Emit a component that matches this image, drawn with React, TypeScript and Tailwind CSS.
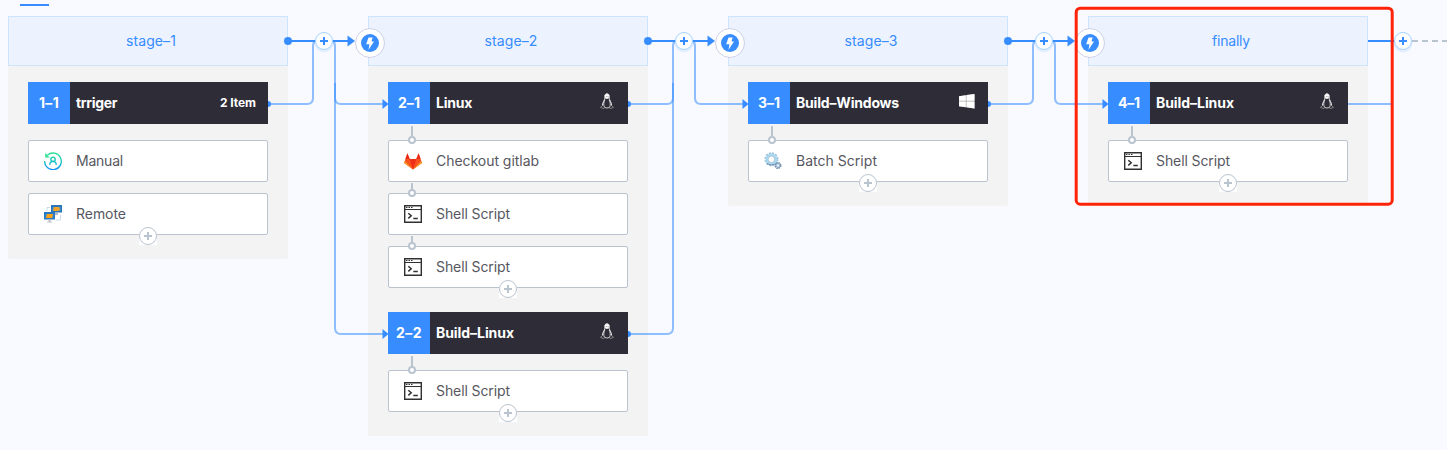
import React, { useLayoutEffect, useRef } from "react";

const sans = "font-['Inter','Liberation_Sans',sans-serif]";

type IconName = "manual" | "remote" | "gitlab" | "shell" | "batch";
type Step = { icon: IconName; label: string; w: number };
type Job = { id: string; idW: number; name: string; w: number; right: "linux" | "windows" | "items"; steps: Step[] };
type Stage = { title: string; w: number; jobs: Job[] };

const shell: Step = { icon: "shell", label: "Shell Script", w: 74 };

const stages: Stage[] = [
  {
    title: "stage–1", w: 50,
    jobs: [{ id: "1–1", idW: 20, name: "trriger", w: 41, right: "items", steps: [{ icon: "manual", label: "Manual", w: 47 }, { icon: "remote", label: "Remote", w: 50 }] }],
  },
  {
    title: "stage–2", w: 53,
    jobs: [
      { id: "2–1", idW: 22, name: "Linux", w: 36, right: "linux", steps: [{ icon: "gitlab", label: "Checkout gitlab", w: 103 }, shell, shell] },
      { id: "2–2", idW: 26, name: "Build–Linux", w: 78, right: "linux", steps: [shell] },
    ],
  },
  {
    title: "stage–3", w: 53,
    jobs: [{ id: "3–1", idW: 22, name: "Build–Windows", w: 103, right: "windows", steps: [{ icon: "batch", label: "Batch Script", w: 81 }] }],
  },
  {
    title: "finally", w: 38,
    jobs: [{ id: "4–1", idW: 22, name: "Build–Linux", w: 78, right: "linux", steps: [shell] }],
  },
];

/* Text whose letter spacing is set so that it fills the given width. */
function Fit({ text, w, className }: { text: string; w: number; className: string }) {
  const ref = useRef<HTMLSpanElement>(null);
  useLayoutEffect(() => {
    const el = ref.current;
    if (!el) return;
    el.style.letterSpacing = "0px";
    const natural = el.getBoundingClientRect().width;
    const spacing = (w - natural) / text.length;
    el.style.letterSpacing = `${spacing}px`;
  }, [text, w]);
  return <span ref={ref} className={`block shrink-0 whitespace-nowrap leading-5 ${className}`}>{text}</span>;
}

function Penguin() {
  return (
    <svg width="14" height="17" viewBox="0 0 14 17" fill="none">
      <path d="M5 5.200C4.300 2.400 5.100.8 7 .8s2.700 1.600 2 4.400c.4 2 2.600 4 2.500 7.200" stroke="#fff" strokeWidth="1" />
      <path d="M5 5.200C4.600 7.500 2.600 9 2.500 12.400" stroke="#fff" strokeWidth="1" />
      <path d="M5 2.200Q7 0 9 2.200L8.700 5.300 7 6 5.200 5.300z" fill="#fff" />
      <path d="M6.200 3.600h.5M7.700 3.600h.5" stroke="#2e2d37" strokeWidth=".8" />
      <path d="M4.800 7C3.800 9.300 3.200 12 4.500 14.300Q7 15.800 9.600 14.300C10.800 12 10.200 9.300 9.200 7" stroke="#ddd" strokeWidth=".9" />
      <path d="M2.800 12.200.5 14.300l3.200 1.400 1.100-1.200M11.200 12.200l2.300 2.100-3.200 1.400-1-1.200" stroke="#999" strokeWidth=".8" />
    </svg>
  );
}

function WindowsLogo() {
  return (
    <svg width="16" height="15" viewBox="0 0 16 15">
      <path d="M0 2.200 15.500 0v14.500L0 12.300z" fill="#aaaaae" />
      <path d="M0 2.200 6.800 1.200v5.600H0zM7.500 1.100 15.500 0v6.800h-8zM0 7.500h6.800v5.700L0 12.300zM7.500 7.500h8v7l-8-1.200z" fill="#fff" />
    </svg>
  );
}

function StepIcon({ name }: { name: IconName }) {
  switch (name) {
    case "manual":
      return (
        <svg width="18" height="18" viewBox="0 0 18 18" fill="none">
          <defs>
            <linearGradient id="mg" x1="0" y1="0" x2="0" y2="18" gradientUnits="userSpaceOnUse">
              <stop stopColor="#2be391" /><stop offset=".5" stopColor="#15c5bd" /><stop offset="1" stopColor="#168fff" />
            </linearGradient>
          </defs>
          <path d="M3.500 3.100A8.300 8.300 0 1 1 .7 9" stroke="url(#mg)" strokeWidth="1.300" />
          <path d="M1.200 1v4.600h4.500z" fill="#2be391" />
          <circle cx="9" cy="7.300" r="2.200" stroke="url(#mg)" strokeWidth="1.400" />
          <path d="M5.700 12.900c.2-2.300 1.300-3.500 3.300-3.500s3.100 1.200 3.300 3.500" stroke="url(#mg)" strokeWidth="1.400" />
        </svg>
      );
    case "remote":
      return (
        <svg width="18" height="18" viewBox="0 0 18 18">
          <path d="M3 6V2.500h3M16.500 10v5h-5" stroke="#c6dcea" fill="none" />
          <path d="M11 8h3v2h-3z" fill="#b8bec4" />
          <rect x="7" y="0" width="11" height="7.500" fill="#2c75b8" />
          <path d="M8.500 2h8v4h-8z" fill="#4796c5" /><path d="M10 2h5l1 3-2 1H9z" fill="#f5a126" />
          <rect x="0" y="7" width="11" height="7.500" fill="#2779c2" />
          <path d="M1.500 9h8v4h-8z" fill="#498fbd" /><path d="M3 9h6l-1 4H2z" fill="#faa21b" />
          <path d="M4.500 14.500h2.300v2H8v1H3v-1h1.500z" fill="#c2c4c7" />
        </svg>
      );
    case "gitlab":
      return (
        <svg width="18" height="17" viewBox="0 0 18 17">
          <path d="M9 16.500 0 10 3.400.3 5.700 6h6.600L14.600.3 18 10z" fill="#f8521f" />
          <path d="M9 16.500 5.700 6h6.600z" fill="#ef3018" />
          <path d="M3.400.3 5.700 6H1.400zM14.600.3 12.300 6h4.300z" fill="#e92c18" />
          <path d="M.7 8 0 10l9 6.500zM17.300 8l.7 2-9 6.500z" fill="#fc9d26" />
        </svg>
      );
    case "shell":
      return (
        <svg width="18" height="18" viewBox="0 0 18 18" fill="none" stroke="#303033">
          <path d="M.7.7h16.600v16.600H.7z" strokeWidth="1.400" />
          <path d="M1 4.500h16" />
          <path d="M2 2.500h7" strokeWidth="1.200" strokeDasharray="1.500 1" />
          <path d="m4.300 8.200 2.900 2.600-2.900 2.600M9.300 13.500h4.500" strokeWidth="1.500" />
        </svg>
      );
    case "batch":
      return (
        <svg width="18" height="18" viewBox="0 0 18 18" fill="none">
          <circle cx="7.400" cy="7.300" r="6" stroke="#9abbd6" strokeWidth="2" strokeDasharray="1.900 1.240" />
          <circle cx="7.400" cy="7.300" r="4.700" stroke="#a8d8ef" strokeWidth="2.600" />
          <circle cx="7.400" cy="7.300" r="3.200" stroke="#8fa7bc" strokeWidth=".6" />
          <path d="M3 11.500q4 3 8 .5" stroke="#6f90ad" />
          <circle cx="14" cy="13.500" r="2.500" stroke="#6c8cab" strokeWidth="2" strokeDasharray="1.400 .56" />
          <circle cx="14" cy="13.500" r="1.700" stroke="#91b6d5" strokeWidth="1" />
        </svg>
      );
  }
}

function AddStep() {
  return (
    <div className="absolute left-[110px] top-[33px] size-[18px] bg-white">
      <svg width="18" height="18" viewBox="0 0 18 18" className="block" fill="none" stroke="#b9c4cf">
        <circle cx="9" cy="9" r="8.500" />
        <path d="M9 5v8M5 9h8" strokeWidth="2" />
      </svg>
    </div>
  );
}

function StepCard({ step, linked, first, last }: { step: Step; linked: boolean; first: boolean; last: boolean }) {
  return (
    <div className="relative flex h-[42px] items-center rounded-[2px] border border-[#b9c4cf] bg-white pl-[15px]">
      <div className="flex w-[32px] shrink-0 items-center"><StepIcon name={step.icon} /></div>
      <Fit text={step.label} w={step.w} className="text-sm text-[#575761]" />
      {linked && (
        <svg width="8" height="20" className="absolute left-[19px] top-[-17px]" fill="none" stroke="#b9c4cf" strokeWidth="2">
          <path d={first ? "M4 2v11" : "M4 6v7"} />
          <circle cx="4" cy="16" r="3" fill="#fff" />
        </svg>
      )}
      {last && <AddStep />}
    </div>
  );
}

function JobBlock({ job }: { job: Job }) {
  return (
    <div className="pb-6">
      <div className="mb-4 flex h-[42px] items-center bg-[#2e2d37] text-white">
        <div className="flex h-full w-[42px] shrink-0 items-center justify-center bg-[#378cff]">
          <Fit text={job.id} w={job.idW} className="text-sm font-bold" />
        </div>
        <div className="flex flex-1 items-center justify-between pl-1.5 pr-3">
          <Fit text={job.name} w={job.w} className="text-sm font-bold" />
          {job.right === "items" && <Fit text="2 Item" w={36} className="text-xs font-bold" />}
          {job.right === "linux" && <div className="mb-1 pr-0.5"><Penguin /></div>}
          {job.right === "windows" && <div className="mb-1 pr-px"><WindowsLogo /></div>}
        </div>
      </div>
      <div className="flex flex-col gap-[11px]">
        {job.steps.map((s, i) => (
          <StepCard key={i} step={s} linked={job.right !== "items"} first={i === 0} last={i === job.steps.length - 1} />
        ))}
      </div>
    </div>
  );
}

function StageColumn({ stage }: { stage: Stage }) {
  return (
    <section className="w-[280px] shrink-0 rounded-b-[2px] bg-[#f3f3f3]">
      <header className="flex h-[50px] items-center justify-center border border-[#cce4fd] bg-[#ecf3ff] pl-1.5">
        <Fit text={stage.title} w={stage.w} className="text-sm text-[#378cff]" />
      </header>
      <div className="px-5 pt-4">
        {stage.jobs.map((j) => <JobBlock key={j.id} job={j} />)}
      </div>
    </section>
  );
}

function Plus({ x }: { x: number }) {
  return (
    <g>
      <circle cx={x} cy="43" r="9.500" fill="#378cff" opacity=".1" />
      <circle cx={x} cy="41" r="8.500" fill="#fff" stroke="#a3d3ff" />
      <path d={`M${x} 37v8M${x - 4} 41h8`} stroke="#378cff" strokeWidth="2" />
    </g>
  );
}

function Bolt({ x }: { x: number }) {
  return (
    <g transform={`translate(${x} 43)`}>
      <circle r="14.500" fill="#fff" stroke="#ccd0e6" />
      <circle r="9" fill="#378cff" />
      <path d="M-1.500-5.500h4.200L1.500-1.500H4L-1.500 6.800-.5 1.200h-3.300z" fill="#fff" />
    </g>
  );
}

function Edges() {
  return (
    <svg width="1447" height="450" className="pointer-events-none absolute left-0 top-0" fill="none">
      {[288, 648, 1008].map((x) => (
        <g key={x}>
          <g stroke="#378cff" strokeOpacity=".55" strokeWidth="2">
            <path d={`M${x - 20} 104h39q6 0 6-6V46q0-4 3-5`} />
            <path d={`M${x + 44} 41q3 1 3 5v52q0 6 6 6h44`} />
            {x === 288 && <path d="M335 83v245q0 6 6 6h44" />}
            {x === 648 && <path d="M628 334h39q6 0 6-6V83" />}
          </g>
          <path d={`M${x} 41h62`} stroke="#378cff" strokeWidth="2" />
          <circle cx={x} cy="41" r="4" fill="#378cff" />
          <path d={`M${x + 59.500} 35.500l7.500 5.500-7.500 5.500z`} fill="#378cff" />
          <path d={`M${x - 20} 101a3 3 0 0 1 0 6z`} fill="#378cff" />
          <path d={`M${x + 94.500} 99l6 5-6 5z`} fill="#378cff" />
          <Plus x={x + 36} />
        </g>
      ))}
      <path d="M382.500 329l6 5-6 5zM628 331a3 3 0 0 1 0 6z" fill="#378cff" />
      <path d="M1368 41h26" stroke="#378cff" strokeWidth="2" />
      <path d="M1348 104h43" stroke="#378cff" strokeOpacity=".55" strokeWidth="2" />
      <path d="M1412 41h35" stroke="#b9c4cf" strokeWidth="2" strokeDasharray="6 4" />
      <Bolt x={370} /><Bolt x={730} /><Bolt x={1090} />
      <rect x="1076.200" y="8.200" width="316" height="196" rx="4" stroke="#ff2407" strokeWidth="3" />
      <Plus x={1403} />
    </svg>
  );
}

export default function App() {
  return (
    <main className={`relative h-[450px] w-[1447px] overflow-hidden bg-[#f9faff] ${sans}`}>
      <div className="ml-5 h-4 w-[29px] pt-1"><div className="h-0.5 bg-[#378cff]" /></div>
      <div className="ml-2 flex items-start gap-20">
        {stages.map((s) => <StageColumn key={s.title} stage={s} />)}
      </div>
      <Edges />
    </main>
  );
}
